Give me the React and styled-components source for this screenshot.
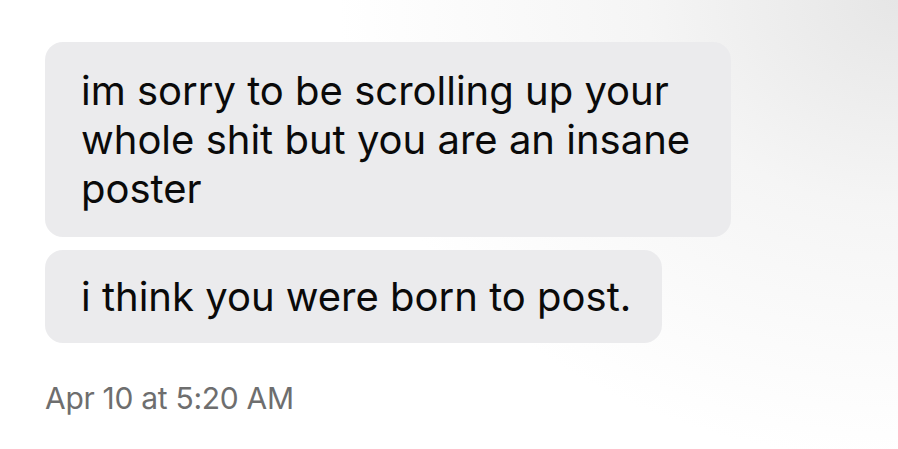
import React from "react";
import styled, { createGlobalStyle } from "styled-components";

const Global = createGlobalStyle`
  html, body { margin: 0; padding: 0; }
  body { width: 898px; height: 449px; overflow: hidden; background: #fff; }
`;

const Screen = styled.div`
  width: 898px;
  height: 449px;
  box-sizing: border-box;
  padding: 42px 0 0 45px;
  background: radial-gradient(ellipse 560px 460px at 100% 0%, #e6e6e6 0%, #f5f5f5 45%, #ffffff 100%);
  display: flex;
  flex-direction: column;
  align-items: flex-start;
`;

const Bubble = styled.div`
  box-sizing: border-box;
  background: #ebebed;
  border-radius: 18px;
  padding: ${(p) => (p.$single ? "22px 31px 22px 36px" : "24px 41px 24px 36px")};
  font-family: Inter, "Liberation Sans", sans-serif;
  font-size: 40px;
  line-height: 49px;
  color: #0a0a0a;
  white-space: nowrap;
  margin-bottom: 13px;
`;

const Stamp = styled.div`
  margin-top: 24px;
  font-family: Inter, "Liberation Sans", sans-serif;
  font-size: 30px;
  color: #6e6e6e;
  letter-spacing: -0.3px;
`;

export default function App() {
  return (
    <>
      <Global />
      <Screen>
        <Bubble>
          im sorry to be scrolling up your
          <br />
          whole shit but you are an insane
          <br />
          poster
        </Bubble>
        <Bubble $single>i think you were born to post.</Bubble>
        <Stamp>Apr 10 at 5:20 AM</Stamp>
      </Screen>
    </>
  );
}
